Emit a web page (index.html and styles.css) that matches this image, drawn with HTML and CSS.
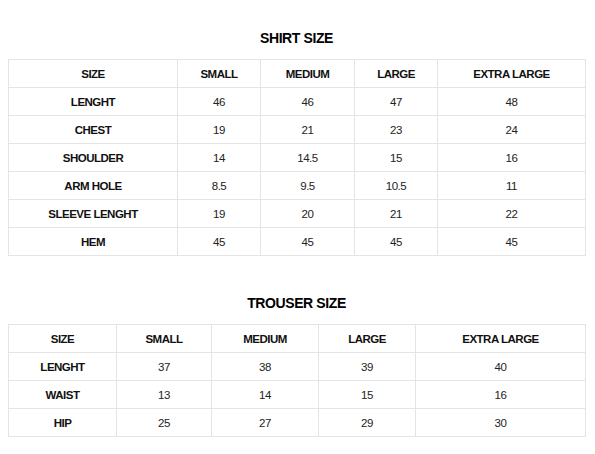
FILE: index.html
```html
<!DOCTYPE html>
<html>
<head>
<meta charset="utf-8">
<link rel="stylesheet" href="styles.css">
</head>
<body>
<div class="page">
  <section class="chart">
    <h2 class="title">SHIRT SIZE</h2>
    <table class="grid shirt">
      <colgroup>
        <col class="c1"><col class="c2"><col class="c3"><col class="c4"><col class="c5">
      </colgroup>
      <tr class="head"><th>SIZE</th><th>SMALL</th><th>MEDIUM</th><th>LARGE</th><th>EXTRA LARGE</th></tr>
      <tr><th>LENGHT</th><td>46</td><td>46</td><td>47</td><td>48</td></tr>
      <tr><th>CHEST</th><td>19</td><td>21</td><td>23</td><td>24</td></tr>
      <tr><th>SHOULDER</th><td>14</td><td>14.5</td><td>15</td><td>16</td></tr>
      <tr><th>ARM HOLE</th><td>8.5</td><td>9.5</td><td>10.5</td><td>11</td></tr>
      <tr><th>SLEEVE LENGHT</th><td>19</td><td>20</td><td>21</td><td>22</td></tr>
      <tr><th>HEM</th><td>45</td><td>45</td><td>45</td><td>45</td></tr>
    </table>
  </section>
  <section class="chart second">
    <h2 class="title">TROUSER SIZE</h2>
    <table class="grid trouser">
      <colgroup>
        <col class="c1"><col class="c2"><col class="c3"><col class="c4"><col class="c5">
      </colgroup>
      <tr class="head"><th>SIZE</th><th>SMALL</th><th>MEDIUM</th><th>LARGE</th><th>EXTRA LARGE</th></tr>
      <tr><th>LENGHT</th><td>37</td><td>38</td><td>39</td><td>40</td></tr>
      <tr><th>WAIST</th><td>13</td><td>14</td><td>15</td><td>16</td></tr>
      <tr><th>HIP</th><td>25</td><td>27</td><td>29</td><td>30</td></tr>
    </table>
  </section>
</div>
</body>
</html>
```

FILE: styles.css
```css
html, body {
  margin: 0;
  padding: 0;
  background: #ffffff;
}
body {
  font-family: "Liberation Sans", Arial, sans-serif;
  color: #111;
}
.page {
  padding: 28px 10px 0 8px;
}
.chart.second {
  margin-top: 37px;
}
.title {
  margin: 0 0 11px 0;
  height: 20px;
  line-height: 20px;
  font-size: 14px;
  font-weight: bold;
  letter-spacing: -0.4px;
  text-align: center;
  color: #000;
}
.grid {
  width: 577px;
  table-layout: fixed;
  border-collapse: collapse;
  font-size: 11.5px;
  letter-spacing: -0.5px;
}
.grid th, .grid td {
  height: 27px;
  padding: 0;
  border: 1px solid #e4e4e4;
  text-align: center;
  vertical-align: middle;
  line-height: 14px;
}
.grid th {
  font-weight: bold;
  color: #111;
}
.grid td {
  font-weight: normal;
  color: #222;
}
.shirt .c1 { width: 169px; }
.shirt .c2 { width: 83px; }
.shirt .c3 { width: 94px; }
.shirt .c4 { width: 83px; }
.shirt .c5 { width: 148px; }
.trouser .c1 { width: 108px; }
.trouser .c2 { width: 95px; }
.trouser .c3 { width: 107px; }
.trouser .c4 { width: 97px; }
.trouser .c5 { width: 170px; }
```
